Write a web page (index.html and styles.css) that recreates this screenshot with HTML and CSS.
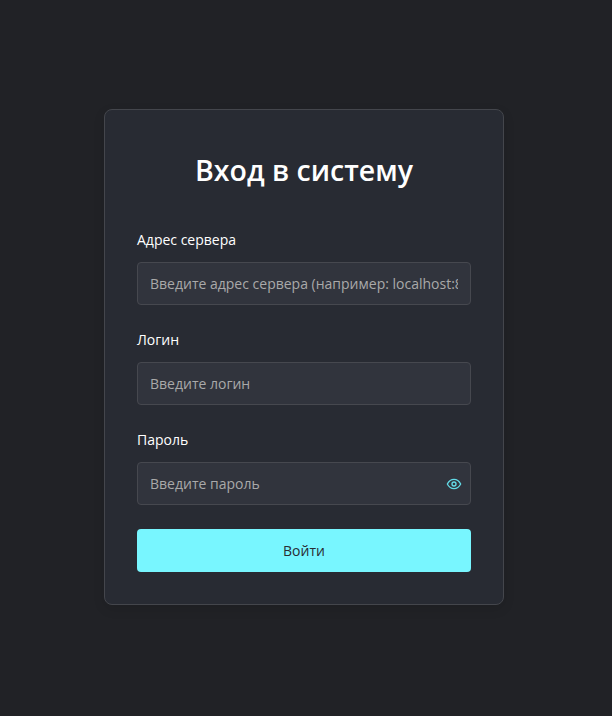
FILE: index.html
```html
<!DOCTYPE html>
<html lang="ru">
<head>
<meta charset="utf-8">
<title>Вход в систему</title>
<link rel="stylesheet" href="styles.css">
</head>
<body>
<main class="card">
  <h1 class="title">Вход в систему</h1>
  <form class="form">
    <div class="field">
      <label class="label" for="server">Адрес сервера</label>
      <input class="input" id="server" type="text" placeholder="Введите адрес сервера (например: localhost:8080)">
    </div>
    <div class="field">
      <label class="label" for="login">Логин</label>
      <input class="input" id="login" type="text" placeholder="Введите логин">
    </div>
    <div class="field">
      <label class="label" for="password">Пароль</label>
      <div class="password">
        <input class="input" id="password" type="password" placeholder="Введите пароль">
        <button class="eye" type="button" aria-label="Показать пароль">
          <svg viewBox="0 0 24 24" width="16" height="16" fill="none" stroke="currentColor" stroke-width="2" stroke-linecap="round" stroke-linejoin="round"><path d="M2 12s3.6-7 10-7 10 7 10 7-3.6 7-10 7-10-7-10-7z"/><circle cx="12" cy="12" r="3"/></svg>
        </button>
      </div>
    </div>
    <button class="submit" type="button">Войти</button>
  </form>
</main>
</body>
</html>
```
FILE: styles.css
```css
* { box-sizing: border-box; }
html, body { height: 100%; }
body {
  margin: 0;
  padding: 0 4px 2px 0;
  background: #212226;
  font-family: "Open Sans", sans-serif;
  display: flex;
  align-items: center;
  justify-content: center;
}
.card {
  width: 400px;
  height: 496px;
  padding: 32px;
  background: #282b33;
  border: 1px solid #44464c;
  border-radius: 8px;
  box-shadow: 0 4px 12px rgba(0, 0, 0, 0.1);
}
.title {
  margin: 9px 0 39px;
  font-size: 28.5px;
  line-height: 39px;
  font-weight: 600;
  color: #ffffff;
  text-align: center;
}
.form { display: flex; flex-direction: column; gap: 24px; }
.field { display: flex; flex-direction: column; gap: 12px; }
.label { font-size: 14px; line-height: 21px; color: #ffffff; font-weight: 400; }
.input {
  width: 100%;
  height: 43px;
  padding: 0 12px;
  background: #31343d;
  border: 1px solid #46484f;
  border-radius: 4px;
  font-family: inherit;
  font-size: 14px;
  color: #ffffff;
  outline: none;
}
.input::placeholder { color: #a9a9a9; opacity: 1; }
.password { position: relative; }
.eye {
  position: absolute;
  top: 14px;
  right: 9px;
  width: 16px;
  height: 16px;
  padding: 0;
  display: flex;
  background: none;
  border: 0;
  color: #63dbe8;
}
.submit {
  height: 43px;
  background: #78f6ff;
  border: 0;
  border-radius: 4px;
  font-family: inherit;
  font-size: 14px;
  color: #2a2d33;
}
```
